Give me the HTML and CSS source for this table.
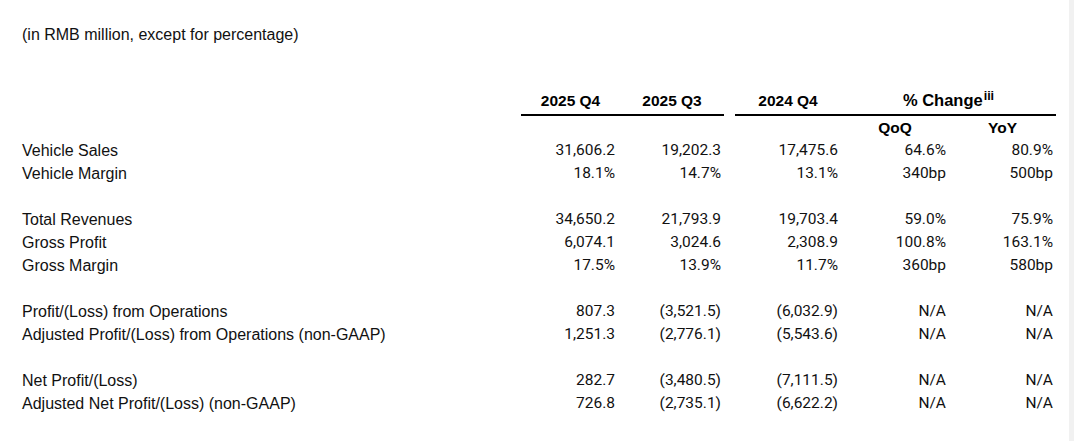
FILE: index.html
```html
<!DOCTYPE html>
<html lang="en">
<head>
<meta charset="utf-8">
<title>Financial Summary</title>
<link rel="stylesheet" href="styles.css">
</head>
<body>
<div class="page">
  <p class="note">(in RMB million, except for percentage)</p>
  <table class="fin">
    <colgroup>
      <col class="c-label">
      <col class="c-q1">
      <col class="c-q2">
      <col class="c-gap">
      <col class="c-q3">
      <col class="c-qoq">
      <col class="c-yoy">
    </colgroup>
    <thead>
      <tr class="head1">
        <th class="blank"></th>
        <th class="rule">2025 Q4</th>
        <th class="rule">2025 Q3</th>
        <th class="blank"></th>
        <th class="rule">2024 Q4</th>
        <th class="rule change" colspan="2">% Change<sup>iii</sup></th>
      </tr>
      <tr class="head2">
        <th></th><th></th><th></th><th></th><th></th>
        <th>QoQ</th>
        <th>YoY</th>
      </tr>
    </thead>
    <tbody>
      <tr><td class="lbl">Vehicle Sales</td><td class="n n1">31,606.2</td><td class="n">19,202.3</td><td></td><td class="n">17,475.6</td><td class="n">64.6%</td><td class="n">80.9%</td></tr>
      <tr><td class="lbl">Vehicle Margin</td><td class="n n1">18.1%</td><td class="n">14.7%</td><td></td><td class="n">13.1%</td><td class="n">340bp</td><td class="n">500bp</td></tr>
      <tr class="spacer"><td colspan="7"></td></tr>
      <tr><td class="lbl">Total Revenues</td><td class="n n1">34,650.2</td><td class="n">21,793.9</td><td></td><td class="n">19,703.4</td><td class="n">59.0%</td><td class="n">75.9%</td></tr>
      <tr><td class="lbl">Gross Profit</td><td class="n n1">6,074.1</td><td class="n">3,024.6</td><td></td><td class="n">2,308.9</td><td class="n">100.8%</td><td class="n">163.1%</td></tr>
      <tr><td class="lbl">Gross Margin</td><td class="n n1">17.5%</td><td class="n">13.9%</td><td></td><td class="n">11.7%</td><td class="n">360bp</td><td class="n">580bp</td></tr>
      <tr class="spacer"><td colspan="7"></td></tr>
      <tr><td class="lbl">Profit/(Loss) from Operations</td><td class="n n1">807.3</td><td class="n">(3,521.5)</td><td></td><td class="n">(6,032.9)</td><td class="n">N/A</td><td class="n">N/A</td></tr>
      <tr><td class="lbl">Adjusted Profit/(Loss) from Operations (non-GAAP)</td><td class="n n1">1,251.3</td><td class="n">(2,776.1)</td><td></td><td class="n">(5,543.6)</td><td class="n">N/A</td><td class="n">N/A</td></tr>
      <tr class="spacer"><td colspan="7"></td></tr>
      <tr><td class="lbl">Net Profit/(Loss)</td><td class="n n1">282.7</td><td class="n">(3,480.5)</td><td></td><td class="n">(7,111.5)</td><td class="n">N/A</td><td class="n">N/A</td></tr>
      <tr><td class="lbl">Adjusted Net Profit/(Loss) (non-GAAP)</td><td class="n n1">726.8</td><td class="n">(2,735.1)</td><td></td><td class="n">(6,622.2)</td><td class="n">N/A</td><td class="n">N/A</td></tr>
    </tbody>
  </table>
</div>
</body>
</html>
```

FILE: styles.css
```css
html {
  background: #f1f1f1;
}
body {
  margin: 0;
  width: 1069px;
  height: 441px;
  background: #ffffff;
  overflow: hidden;
}
.page {
  padding: 23px 0 0 22px;
  color: #111;
  font-family: "Liberation Sans", Arial, sans-serif;
  font-size: 16px;
}
.note {
  margin: 0;
  line-height: 23px;
}
.fin {
  margin-top: 43px;
  table-layout: fixed;
  border-collapse: separate;
  border-spacing: 0;
  width: 1034px;
}
.c-label { width: 499px; }
.c-q1 { width: 99px; }
.c-q2 { width: 104px; }
.c-gap { width: 11px; }
.c-q3 { width: 106px; }
.c-qoq { width: 108px; }
.c-yoy { width: 107px; }

.fin th,
.fin td {
  padding: 0;
  height: 23px;
  line-height: 23px;
  white-space: nowrap;
}
.fin th {
  font-weight: bold;
  font-size: 15.5px;
  color: #000;
  text-align: center;
}
.head1 th {
  height: 24px;
  line-height: 23px;
  padding-bottom: 1px;
  vertical-align: top;
}
.head1 th.rule {
  border-bottom: 2px solid #000;
}
.head1 th.change {
  font-size: 16.5px;
}
.fin sup {
  font-size: 12.5px;
  line-height: 0;
  vertical-align: 6px;
  margin-left: 1px;
}
.lbl {
  text-align: left;
}
.n {
  text-align: right;
  padding-right: 3px !important;
  font-family: Roboto, "Liberation Sans", sans-serif;
  font-size: 15.5px;
}
.n1 {
  padding-right: 5px !important;
}
.spacer td {
  height: 23px;
}
```
